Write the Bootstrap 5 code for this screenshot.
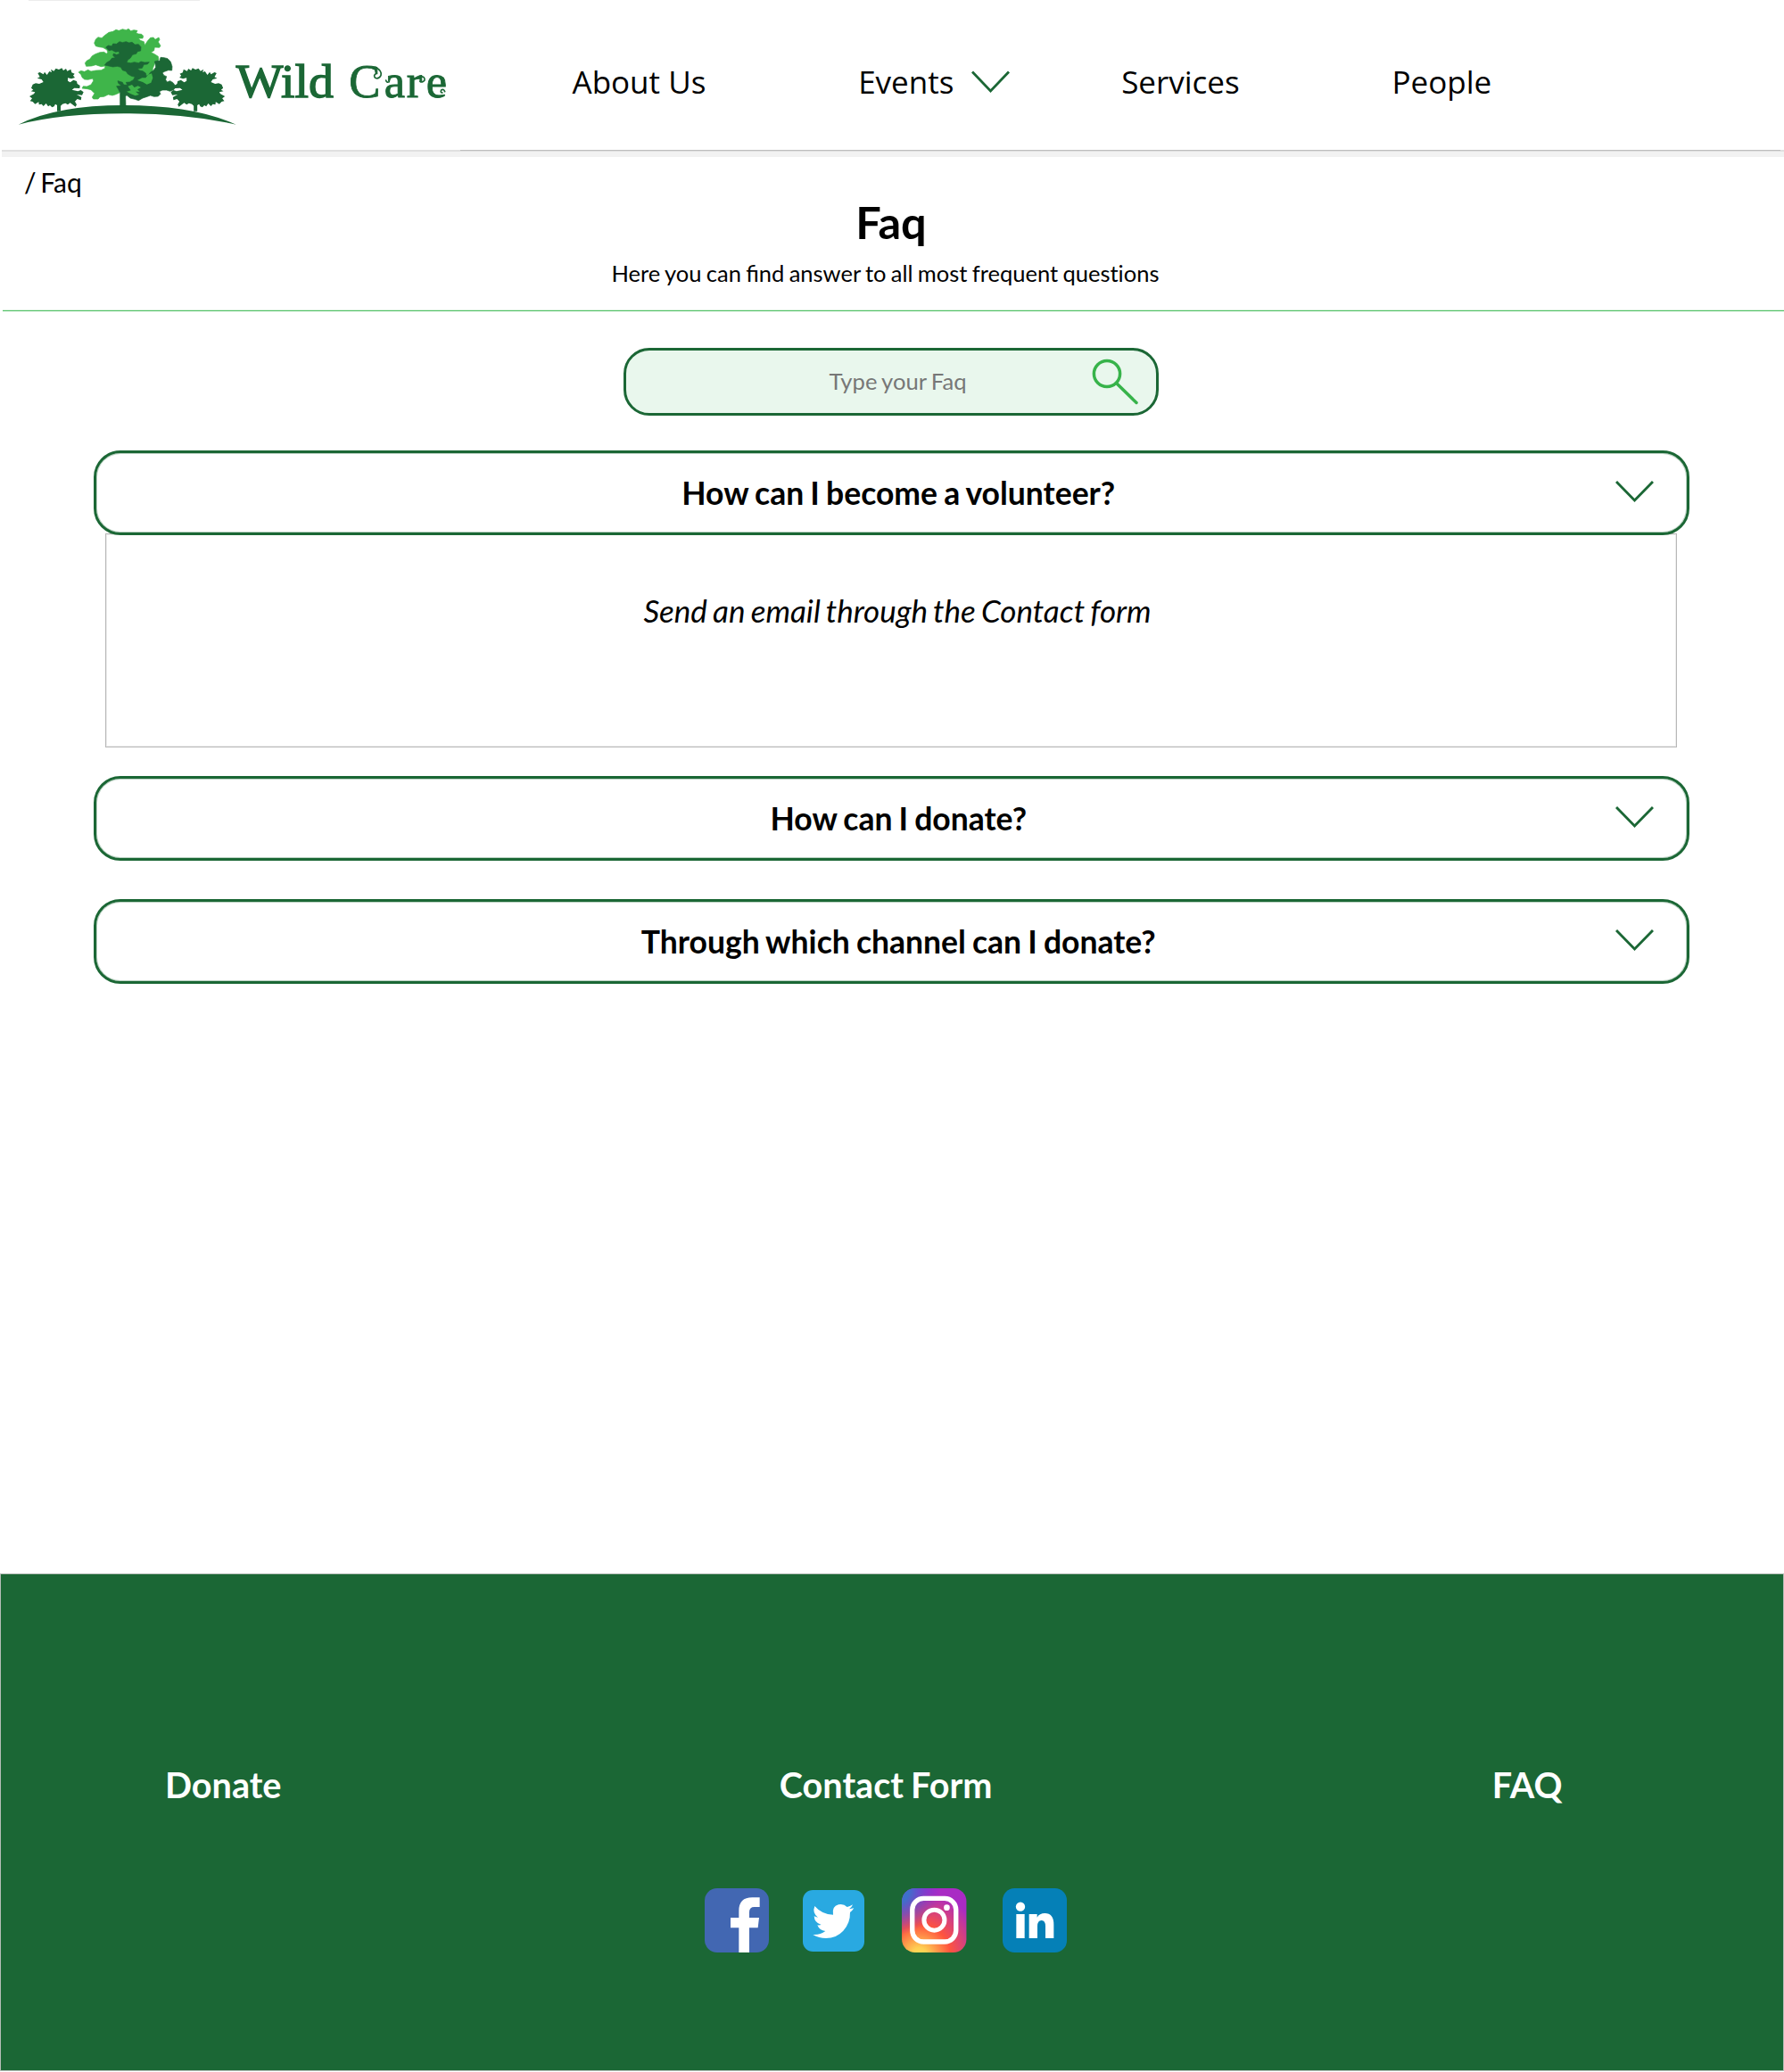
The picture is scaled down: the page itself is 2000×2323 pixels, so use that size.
<!DOCTYPE html>
<html lang="en">
<head>
<meta charset="utf-8">
<title>Wild Care – Faq</title>
<link rel="stylesheet" href="https://cdn.jsdelivr.net/npm/bootstrap@5.3.0/dist/css/bootstrap.min.css">
<style>
  :root { --wc-green: #1b6735; --wc-light: #3fb54a; }
  body { font-family: Lato, "Noto Sans", sans-serif; color: #000; background: #fff; width: 2000px; height: 2323px; overflow: hidden; }
  a { color: inherit; text-decoration: none; }
  .site-top { height: 176px; }
  .top-tick { left: 32px; top: 0; width: 192px; height: 1px; background: #ececec; }
  .top-inner { height: 168px; }
  .wc-logo { width: 516px; height: 168px; }
  .main-nav { padding-top: 15px; margin-left: 125.5px; font-family: "Open Sans", "Noto Sans", sans-serif; font-size: 35px; line-height: 48px; gap: 170.8px; }
  .ev-link { gap: 20px; margin-right: -46px; }
  .top-edge { height: 8px; margin-left: 2px; background: linear-gradient(#e0e0e0 0 2px, #f2f2f2 2px 8px); }
  .top-edge div { margin-left: 514px; margin-right: 4px; height: 1px; background: #bdbdbd; }
  .faq-hero { height: 173px; padding-top: 10px; margin-left: 3px; border-bottom: 1px solid #4dbf62; box-shadow: inset 0 -1px #d8f0dd; }
  .crumb-line { font-size: 30px; line-height: 36px; padding-left: 24px; word-spacing: -3px; }
  .faq-title { font-size: 50.5px; line-height: 52px; font-weight: 700; padding: 1px 5px 0 0; }
  .faq-sub { font-size: 25.5px; line-height: 32px; margin-top: 15px; word-spacing: -1.2px; padding-right: 18px; }
  .no-lig { font-variant-ligatures: none; }
  .search-box { width: 600px; height: 76px; margin: 41px 0 0 699px; }
  .search-box .form-control { height: 76px; border: 3px solid var(--wc-green); border-radius: 29px; background: #e9f7ed; font-size: 25.6px; padding: 0 0 3px 15px; word-spacing: -1.2px; }
  .search-box .form-control::placeholder { color: #777; opacity: 1; }
  .search-box svg { right: 18px; top: 8px; }
  .faq-list { margin: 38.5px 106.5px 0 105px; }
  .faq-q { height: 95px; border: 3px solid var(--wc-green); box-shadow: inset 0 0 0 1px rgba(27,103,53,.3); border-radius: 30px; background: #fff; font-size: 35.5px; font-weight: 700; padding: 0 37px 0 96px; line-height: 44px; color: #000; word-spacing: -1.5px; }
  .faq-q span { padding-top: 2px; }
  .faq-a { margin: -2px 13.5px 0 13px; height: 240px; border: 1px solid #b8b8b8; box-shadow: inset 0 0 0 1px #ededed; font-size: 35px; font-style: italic; line-height: 44px; padding: 63px 0 0 14px; word-spacing: -2px; }
  .gap-a { margin-top: 32px; }
  .gap-b { margin-top: 43px; }
  .site-foot { height: 558.5px; margin-top: 661px; background: var(--wc-green); border: 1px solid #b5bdb7; color: #fff; }
  .foot-links { padding: 208px 247.5px 0 184px; font-size: 39.6px; font-weight: 700; line-height: 56px; word-spacing: -1.5px; }
  .foot-mid { margin-right: 2px; }
  .foot-social { padding: 88px 0 0 789px; }
  .so-tw { margin: 1px 0 0 38px; }
  .so-ig { margin-left: 42px; }
  .so-li { margin-left: 40px; }
</style>
<script src="https://cdn.jsdelivr.net/npm/bootstrap@5.3.0/dist/js/bootstrap.bundle.min.js"></script>
</head>
<body>
<header class="site-top position-relative">
  <div class="top-tick position-absolute"></div>
  <div class="top-inner d-flex align-items-stretch">
    <a href="#" class="wc-logo d-block flex-shrink-0" aria-label="Wild Care">
      <svg width="516" height="168" viewBox="0 0 1548 504">
        <defs>
          <path id="sideTree" d="M192 374V354L186 350L182 358L175 361L168 354L162 358L155 348L146 357L140 350L131 352L130 343L118 350L110 342L101 340L108 331L99 324L114 316L118 310L104 307L112 302L105 296L110 284L120 280L132 282L146 276L140 267L125 263L134 259L127 246L134 243L146 250L150 242L158 252L166 240L174 243L171 233L181 239L188 230L198 234L208 229L213 237L222 231L226 239L238 233L241 244L251 248L246 254L252 261L240 265L228 262L228 272L236 277L247 269L258 273L260 282L269 288L268 297L250 296L242 302L262 307L272 303L281 310L276 320L258 318L274 327L272 337L260 333L252 341L258 352L254 359L244 352L236 346L228 352L220 347L210 350L204 356V374Z"/>
        </defs>
        <g fill="#1b6735">
          <path d="M62 419Q190 354 418 354Q650 354 794 419Q620 381 428 382Q210 381 62 419Z"/>
          <use href="#sideTree"/>
          <use href="#sideTree" transform="translate(855.500)scale(-1 1)"/>
        </g>
        <path fill="#3fb54a" stroke="#3fb54a" stroke-width="2" stroke-linejoin="round" d="M330 125L342 128L352 119L366 109L380 106L390 100L400 103L412 98L424 101L432 97L440 104L450 101L462 103L458 111L466 114L476 115L482 121L480 129L466 129L472 136L484 140L487 152L496 138L506 127L516 126L522 133L534 126L537 133L532 141L540 154L536 160L520 159L518 170L508 176L520 182L532 190L534 201L522 210L514 230L512 260L508 276L490 284L470 292L466 318L455 322L440 316L424 318L428 300L418 290L404 302L402 312L388 318L378 321L364 318L350 325L336 326L330 333L314 333L310 327L318 314L306 302L294 299L276 297L280 290L292 291L306 285L314 272L312 264L296 268L284 267L276 260L272 250L264 243L272 238L284 241L296 235L306 240L322 237L340 236L352 230L354 222L340 224L322 218L308 222L290 223L286 212L292 204L302 199L310 188L320 182L336 176L350 175L358 181L362 176L360 168L346 160L334 158L322 155L317 145L322 132Z"/>
        <path fill="#1b6735" stroke="#1b6735" stroke-width="2" stroke-linejoin="round" d="M356 159L364 153L376 155L380 147L392 148L402 140L412 143L424 140L434 144L444 142L454 150L466 149L474 158L473 171L463 173L458 181L446 184L438 196L430 201L426 210L440 212L452 209L466 212L474 207L486 210L502 209L496 216L484 217L478 229L462 231L470 237L480 239L490 246L492 256L500 252L506 243L516 237L524 226L522 214L520 207L530 204L537 205L540 193L552 194L564 197L574 208L579 224L578 237L566 236L553 241L546 245L552 254L560 257L557 268L562 276L572 272L582 278L592 292L584 302L572 307L560 303L546 303L536 308L540 316L532 324L518 325L506 321L492 326L480 330L466 338L454 334L438 330L426 320L422 324L423 358H404V312L398 300L392 290L408 288L398 280L396 272L412 277L416 285L428 286L424 277L436 276L448 269L454 259L442 256L430 249L424 240L412 236L406 226L394 223L380 225L366 222L352 219L358 211L370 204L376 196L388 194L380 187L382 180L392 184L402 181L400 173L388 175L376 168L366 170Z"/>
        <path fill="#3fb54a" d="M430 290L444 285L452 294L464 289L474 294L462 301L470 308L456 308L468 318L455 322L440 316L426 308L440 304ZM478 262L490 262L498 251L510 247L514 262L508 278L494 284L480 276L462 270Z"/>
        <g fill="#1b6735" stroke="#1b6735" font-family="'Liberation Serif', serif" font-size="158">
          <text x="794" y="326" textLength="328" lengthAdjust="spacingAndGlyphs" stroke-width="4">Wild</text>
          <text x="1174 1292 1367 1433" y="326" stroke-width="2.500">Care</text>
        </g>
        <g fill="none" stroke="#1b6735" stroke-width="5" stroke-linecap="round">
          <path d="M1262 226Q1286 238 1281 254Q1273 268 1262 262Q1255 254 1263 249"/>
          <path d="M1298 270Q1300 279 1309 275"/>
          <path d="M1413 258Q1430 256 1428 270Q1420 280 1412 273"/>
          <path d="M1496 308Q1492 298 1484 303Q1480 311 1488 312"/>
        </g>
      </svg>
    </a>
    <nav class="main-nav d-flex align-items-center">
      <a href="#">About Us</a>
      <a href="#" class="ev-link d-flex align-items-center">Events
        <svg width="43" height="26" viewBox="0 0 43 26" fill="none" stroke="#1b6735" stroke-width="2.800"><path d="M1 1.500L21.500 23L42 1.500"/></svg>
      </a>
      <a href="#">Services</a>
      <a href="#">People</a>
    </nav>
  </div>
  <div class="top-edge"><div></div></div>
</header>

<main>
  <section class="faq-hero">
    <div class="crumb-line">/ Faq</div>
    <h1 class="faq-title text-center mb-0">Faq</h1>
    <p class="faq-sub text-center mb-0">Here you can find answer to all most frequent <span class="no-lig">questions</span></p>
  </section>

  <form class="search-box position-relative">
    <input class="form-control text-center" type="text" placeholder="Type your Faq" aria-label="Type your Faq">
    <svg class="position-absolute" width="60" height="60" viewBox="0 0 60 60" fill="none" stroke="#37b34a" stroke-width="3.500" stroke-linecap="round"><circle cx="20" cy="21" r="14.600"/><path d="M30.500 31.500L53 53.500"/></svg>
  </form>

  <section class="faq-list">
    <div class="faq-q d-flex align-items-center position-relative">
      <span class="flex-grow-1 text-center">How can I become a volunteer?</span>
      <svg width="43" height="26" viewBox="0 0 43 26" fill="none" stroke="#1b6735" stroke-width="2.900"><path d="M1 1L21.500 22L42 1"/></svg>
    </div>
    <div class="faq-a text-center">Send an email through the Contact form</div>
    <div class="faq-q gap-a d-flex align-items-center">
      <span class="flex-grow-1 text-center">How can I donate?</span>
      <svg width="43" height="26" viewBox="0 0 43 26" fill="none" stroke="#1b6735" stroke-width="2.900"><path d="M1 1L21.500 22L42 1"/></svg>
    </div>
    <div class="faq-q gap-b d-flex align-items-center">
      <span class="flex-grow-1 text-center">Through which channel can I donate?</span>
      <svg width="43" height="26" viewBox="0 0 43 26" fill="none" stroke="#1b6735" stroke-width="2.900"><path d="M1 1L21.500 22L42 1"/></svg>
    </div>
  </section>
</main>

<footer class="site-foot">
  <div class="foot-links d-flex justify-content-between">
    <a href="#">Donate</a><a href="#" class="foot-mid">Contact Form</a><a href="#">FAQ</a>
  </div>
  <div class="foot-social d-flex align-items-center">
    <a href="#" aria-label="Facebook"><svg class="d-block" width="72" height="72" viewBox="0 0 216 216"><rect width="216" height="216" rx="42" fill="#4267b2"/><path fill="#fff" d="M115 216V133H87V99H115V76Q115 31 160 31H185V63H167Q150 63 150 80V99H183L179 133H150V216Z"/></svg></a>
    <a href="#" class="so-tw" aria-label="Twitter"><svg class="d-block" width="69" height="69" viewBox="0 0 207 207"><rect width="207" height="207" rx="34" fill="#29a9e1"/><path fill="#fff" d="M40 54Q64 82 102 83Q97 55 120 49Q137 45 149 57Q158 55 168 49Q165 58 156 64Q165 63 172 61Q167 69 159 75Q160 111 136 137Q113 162 78 162Q54 162 34 150Q58 152 76 138Q56 136 49 118Q56 119 62 117Q39 110 38 88Q44 91 51 92Q31 77 40 54Z"/></svg></a>
    <a href="#" class="so-ig" aria-label="Instagram"><svg class="d-block" width="72.500" height="72" viewBox="0 0 217 216">
      <defs>
        <radialGradient id="igWarm" cx=".27" cy="1.050" r="1"><stop offset="0" stop-color="#ffdd55"/><stop offset=".12" stop-color="#ffd054"/><stop offset=".48" stop-color="#ff543e"/><stop offset="1" stop-color="#a92bc4"/></radialGradient>
        <radialGradient id="igCool" cx="-.1" cy=".03" r=".7"><stop offset="0" stop-color="#3771c8"/><stop offset=".3" stop-color="#3f6fcb"/><stop offset="1" stop-color="#6a2be0" stop-opacity="0"/></radialGradient>
      </defs>
      <rect width="217" height="216" rx="44" fill="url(#igWarm)"/><rect width="217" height="216" rx="44" fill="url(#igCool)"/>
      <g fill="none" stroke="#fff"><rect x="35" y="34" width="147" height="146" rx="38" stroke-width="16"/><circle cx="109" cy="107" r="34.500" stroke-width="15"/></g><circle cx="151" cy="65" r="10" fill="#fff"/></svg></a>
    <a href="#" class="so-li" aria-label="LinkedIn"><svg class="d-block" width="72" height="72" viewBox="0 0 216 216"><rect width="216" height="216" rx="40" fill="#0580b7"/><g fill="#fff"><circle cx="60" cy="62" r="15.500"/><path d="M46 87H74V168H46ZM89 87H116V98Q124 84 142 84Q172 84 172 122V168H144V128Q144 108 131 108Q117 108 117 128V168H89Z"/></g></svg></a>
  </div>
</footer>
</body>
</html>
